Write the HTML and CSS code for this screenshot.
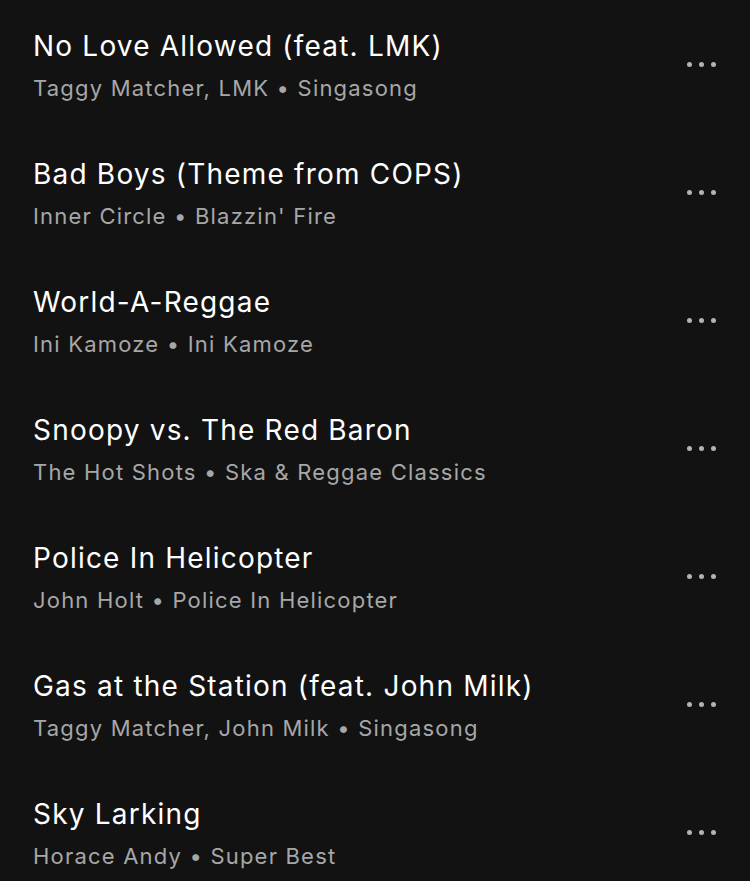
FILE: index.html
```html
<!DOCTYPE html>
<html lang="en">
<head>
  <meta charset="UTF-8" />
  <meta name="viewport" content="width=device-width, initial-scale=1.0"/>
  <title>Tracks</title>
  <link rel="stylesheet" href="styles.css">
</head>
<body>
  <ul class="track-list">
    <li class="track">
      <div class="track-info">
        <div class="track-title">No Love Allowed (feat. LMK)</div>
        <div class="track-sub">Taggy Matcher, LMK • Singasong</div>
      </div>
      <button class="more" aria-label="More"><span></span><span></span><span></span></button>
    </li>
    <li class="track">
      <div class="track-info">
        <div class="track-title">Bad Boys (Theme from COPS)</div>
        <div class="track-sub">Inner Circle • Blazzin' Fire</div>
      </div>
      <button class="more" aria-label="More"><span></span><span></span><span></span></button>
    </li>
    <li class="track">
      <div class="track-info">
        <div class="track-title">World-A-Reggae</div>
        <div class="track-sub">Ini Kamoze • Ini Kamoze</div>
      </div>
      <button class="more" aria-label="More"><span></span><span></span><span></span></button>
    </li>
    <li class="track">
      <div class="track-info">
        <div class="track-title">Snoopy vs. The Red Baron</div>
        <div class="track-sub">The Hot Shots • Ska &amp; Reggae Classics</div>
      </div>
      <button class="more" aria-label="More"><span></span><span></span><span></span></button>
    </li>
    <li class="track">
      <div class="track-info">
        <div class="track-title">Police In Helicopter</div>
        <div class="track-sub">John Holt • Police In Helicopter</div>
      </div>
      <button class="more" aria-label="More"><span></span><span></span><span></span></button>
    </li>
    <li class="track">
      <div class="track-info">
        <div class="track-title">Gas at the Station (feat. John Milk)</div>
        <div class="track-sub">Taggy Matcher, John Milk • Singasong</div>
      </div>
      <button class="more" aria-label="More"><span></span><span></span><span></span></button>
    </li>
    <li class="track">
      <div class="track-info">
        <div class="track-title">Sky Larking</div>
        <div class="track-sub">Horace Andy • Super Best</div>
      </div>
      <button class="more" aria-label="More"><span></span><span></span><span></span></button>
    </li>
  </ul>
</body>
</html>
```

FILE: styles.css
```css
body {
  margin: 0;
  background: #121212;
  font-family: 'Inter', 'Noto Sans', sans-serif;
  overflow: hidden;
}
.track-list {
  list-style: none;
  margin: 0;
  padding: 0 0 0 33px;
}
.track {
  display: flex;
  align-items: flex-start;
  height: 128px;
  padding-top: 28px;
  box-sizing: border-box;
}
.track-info {
  flex: 1;
  display: flex;
  flex-direction: column;
  gap: 8px;
}
.track-title {
  color: #ffffff;
  font-size: 28px;
  line-height: 36px;
  letter-spacing: 1.2px;
}
.track-sub {
  color: #a7a7a7;
  font-size: 22px;
  line-height: 32px;
  letter-spacing: 1.2px;
}
.more {
  display: flex;
  gap: 7px;
  background: none;
  border: none;
  padding: 0;
  margin-right: 34px;
  margin-top: 34px;
}
.more span {
  width: 5px;
  height: 5px;
  border-radius: 50%;
  background: #b3b3b3;
}
```
